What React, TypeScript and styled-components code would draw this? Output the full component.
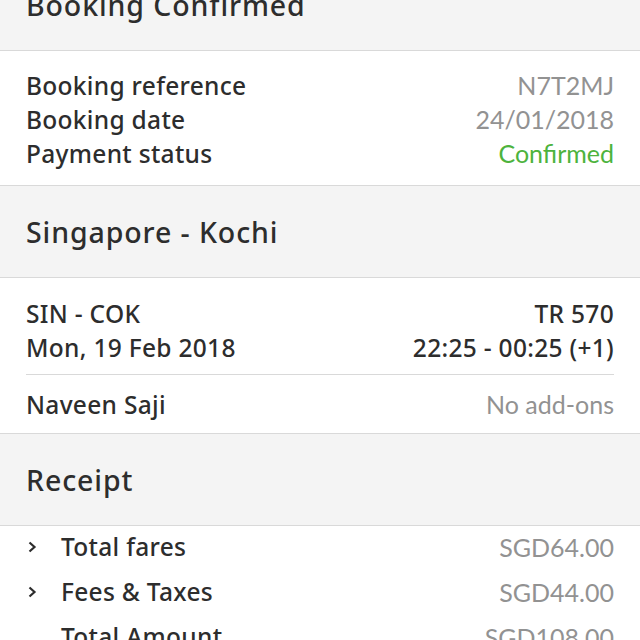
import React from 'react';
import styled, {createGlobalStyle} from 'styled-components';

const GlobalStyle = createGlobalStyle`
    html, body {
        margin: 0;
        padding: 0;
        background: #fff;
        overflow: hidden;
    }
    body {
        font-family: "Noto Sans", "Open Sans", sans-serif;
        color: #2d2d2d;
        -webkit-font-smoothing: antialiased;
    }
`;

const bookingRows = [
    {label: 'Booking reference', value: 'N7T2MJ'},
    {label: 'Booking date', value: '24/01/2018'},
    {label: 'Payment status', value: 'Confirmed', accent: true},
];

const receiptRows = [
    {label: 'Total fares', value: 'SGD64.00', expandable: true},
    {label: 'Fees & Taxes', value: 'SGD44.00', expandable: true},
    {label: 'Total Amount', value: 'SGD108.00', expandable: false},
];

/**
 * 小箭頭
 */
const Chevron = () => (
    <ChevronIcon width="9" height="12" viewBox="0 0 9 12">
        <polyline points="1.5,1.5 6.5,6 1.5,10.5" fill="none" stroke="#2d2d2d" strokeWidth="2.2" strokeLinejoin="miter" />
    </ChevronIcon>
);

const App = () => {
    return <Screen>
        <GlobalStyle />

        <SectionHeader>
            <HeaderTitle>Booking Confirmed</HeaderTitle>
        </SectionHeader>

        <InfoBlock>
            {bookingRows.map(row => (
                <InfoRow key={row.label}>
                    <Label>{row.label}</Label>
                    <Value $accent={row.accent}>{row.value}</Value>
                </InfoRow>
            ))}
        </InfoBlock>

        <SectionHeader>
            <HeaderTitle>Singapore - Kochi</HeaderTitle>
        </SectionHeader>

        <FlightBlock>
            <FlightInfo>
                <InfoRow>
                    <Label>SIN - COK</Label>
                    <Strong>TR 570</Strong>
                </InfoRow>
                <InfoRow>
                    <Label>Mon, 19 Feb 2018</Label>
                    <Strong>22:25 - 00:25 (+1)</Strong>
                </InfoRow>
            </FlightInfo>
            <PassengerRow>
                <Label>Naveen Saji</Label>
                <Value>No add-ons</Value>
            </PassengerRow>
        </FlightBlock>

        <SectionHeader>
            <HeaderTitle>Receipt</HeaderTitle>
        </SectionHeader>

        <ReceiptBlock>
            {receiptRows.map(row => (
                <ReceiptRow key={row.label}>
                    <ChevronSlot>{row.expandable && <Chevron />}</ChevronSlot>
                    <Label>{row.label}</Label>
                    <Value>{row.value}</Value>
                </ReceiptRow>
            ))}
        </ReceiptBlock>
    </Screen>;
};

export default App;



const Screen = styled.div`
    width: 640px;
    margin-top: -41px;
    display: flex;
    flex-direction: column;
`;

const SectionHeader = styled.div`
    height: 92px;
    background: #f4f4f4;
    border-bottom: 1px solid #d9d9d9;
    display: flex;
    align-items: center;
    padding: 0 26px;
    box-sizing: border-box;

    & + & {
        border-top: 1px solid #d9d9d9;
    }
`;

const HeaderTitle = styled.h2`
    margin: 0;
    font-size: 28.5px;
    font-weight: 500;
    letter-spacing: 0.9px;
    color: #2d2d2d;
`;

const InfoBlock = styled.div`
    padding: 17px 26px 15px;
    border-bottom: 1px solid #d9d9d9;
    display: flex;
    flex-direction: column;
`;

const InfoRow = styled.div`
    display: flex;
    justify-content: space-between;
    align-items: center;
    height: 34px;
`;

const Label = styled.span`
    font-size: 24.5px;
    font-weight: 500;
    letter-spacing: 0.3px;
    color: #2d2d2d;
    flex: 1;
`;

const Value = styled.span<{$accent?: boolean}>`
    font-family: Lato, "Open Sans", sans-serif;
    font-size: 25px;
    color: ${props => props.$accent ? '#4db33d' : '#929292'};
`;

const Strong = styled.span`
    font-size: 24.5px;
    font-weight: 500;
    letter-spacing: 0.3px;
    color: #2d2d2d;
`;

const FlightBlock = styled.div`
    padding: 0 26px;
    border-bottom: 1px solid #d9d9d9;
`;

const FlightInfo = styled.div`
    padding: 18px 0 10px;
    border-bottom: 1px solid #d9d9d9;
`;

const PassengerRow = styled.div`
    display: flex;
    align-items: center;
    justify-content: space-between;
    height: 58px;
`;

const ReceiptBlock = styled.div`
    padding: 0 26px;
    margin-top: -2px;
`;

const ReceiptRow = styled.div`
    display: flex;
    align-items: center;
    height: 45px;
`;

const ChevronSlot = styled.span`
    width: 35px;
    display: flex;
    align-items: center;
`;

const ChevronIcon = styled.svg`
    display: block;
    margin-left: 2px;
`;
